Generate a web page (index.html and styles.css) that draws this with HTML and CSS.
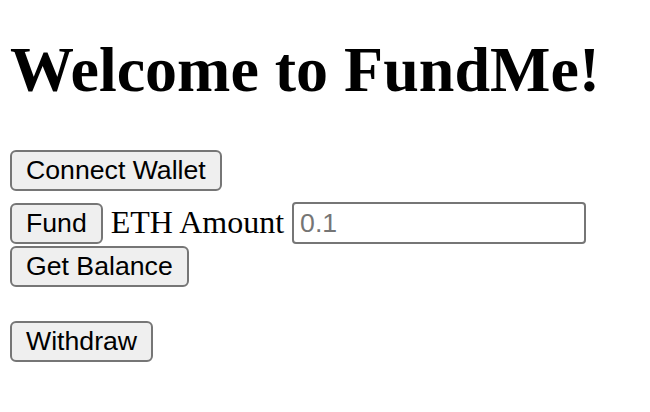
FILE: index.html
```html
<!DOCTYPE html>
<html lang="en">
<head>
<meta charset="utf-8">
<title>FundMe</title>
<link rel="stylesheet" href="styles.css">
</head>
<body>
<h1 class="title">Welcome to FundMe!</h1>
<div class="row row-connect">
  <button class="btn" id="connectButton">Connect Wallet</button>
</div>
<div class="row row-fund">
  <button class="btn" id="fundButton">Fund</button>
  <label class="label" for="ethAmount">ETH Amount</label>
  <input class="amount" id="ethAmount" placeholder="0.1">
</div>
<div class="row row-balance">
  <button class="btn" id="balanceButton">Get Balance</button>
</div>
<div class="row row-withdraw">
  <button class="btn" id="withdrawButton">Withdraw</button>
</div>
</body>
</html>
```
FILE: styles.css
```css
html, body {
  background: #ffffff;
}
body {
  margin: 0;
  padding: 0 10px;
  font-family: "Liberation Serif", "Times New Roman", serif;
  font-size: 32px;
  color: #000000;
}
.title {
  font-size: 64px;
  font-weight: bold;
  line-height: 73px;
  margin: 33px 0 44px;
}
.row {
  display: flex;
  align-items: flex-end;
}
.row-fund {
  margin-top: 11px;
}
.row-balance {
  margin-top: 2px;
}
.row-withdraw {
  margin-top: 34px;
}
.btn {
  box-sizing: border-box;
  height: 41px;
  margin: 0;
  padding: 0 14px;
  background: #efefef;
  border: 2px solid #767676;
  border-radius: 6px;
  color: #000000;
  font-family: "Liberation Sans", Arial, sans-serif;
  font-size: 26.67px;
  line-height: 1;
}
.label {
  margin: 0 8px 3px;
  line-height: 37px;
}
.amount {
  box-sizing: border-box;
  width: 294px;
  height: 42px;
  margin: 0;
  padding: 0 6px;
  border: 2px solid #767676;
  border-radius: 4px;
  background: #ffffff;
  font-family: "Liberation Sans", Arial, sans-serif;
  font-size: 26.67px;
  outline: none;
}
.amount::placeholder {
  color: #757575;
}
```
